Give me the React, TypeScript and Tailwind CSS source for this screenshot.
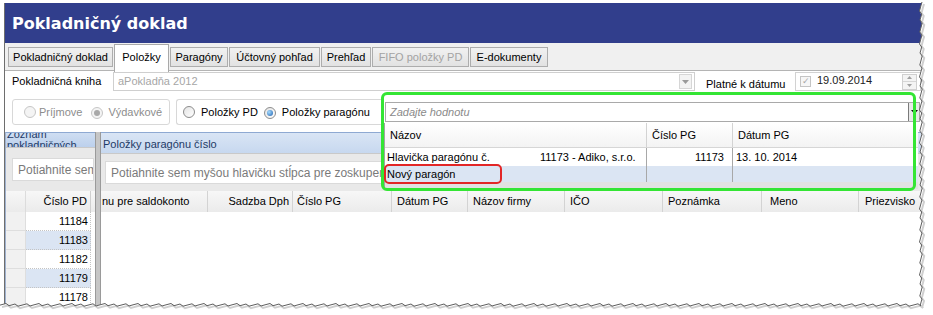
import React from 'react';

const tabs = [
  { label: 'Pokladničný doklad', w: 'w-[105px]' },
  { label: 'Položky', w: 'w-[55px]', active: true },
  { label: 'Paragóny', w: 'w-[58px]' },
  { label: 'Účtovný pohľad', w: 'w-[91px]' },
  { label: 'Prehľad', w: 'w-[50px]' },
  { label: 'FIFO položky PD', w: 'w-[97px]', disabled: true },
  { label: 'E-dokumenty', w: 'w-[78px]' },
];

const gridCols = [
  { label: 'nu pre saldokonto', w: 'w-[107px]', align: 'justify-start pl-[1px]' },
  { label: 'Sadzba Dph', w: 'w-[85px]', align: 'justify-end pr-[3px]' },
  { label: 'Číslo PG', w: 'w-[99px]', align: 'justify-start pl-[4px]' },
  { label: 'Dátum PG', w: 'w-[76px]', align: 'justify-start pl-[5px]' },
  { label: 'Názov firmy', w: 'w-[97px]', align: 'justify-start pl-[5px]' },
  { label: 'IČO', w: 'w-[98px]', align: 'justify-start pl-[5px]' },
  { label: 'Poznámka', w: 'w-[99px]', align: 'justify-start pl-[5px]' },
  { label: 'Meno', w: 'w-[97px]', align: 'justify-start pl-[8px]' },
  { label: 'Priezvisko', w: 'w-[70px]', align: 'justify-start pl-[6px]' },
];

const leftRows = [
  { v: '11184', sel: false },
  { v: '11183', sel: true },
  { v: '11182', sel: false },
  { v: '11179', sel: true },
  { v: '11178', sel: false },
];

const Radio = ({ checked, disabled }: { checked?: boolean; disabled?: boolean }) => (
  <span
    className={`inline-flex h-[12px] w-[12px] shrink-0 items-center justify-center rounded-full border ${
      disabled ? 'border-[#c6c6c6] bg-[#f4f4f4]' : 'border-[#8c8c8c] bg-gradient-to-br from-[#e4e4e4] to-white'
    }`}
  >
    {checked && (
      <span
        className={`h-[6px] w-[6px] rounded-full ${
          disabled ? 'bg-[#a9a9a9]' : 'bg-[radial-gradient(circle_at_35%_35%,#a6dcff,#1d5fae)]'
        }`}
      />
    )}
  </span>
);

// torn paper edge along the right and bottom side
const jag = (i: number) => ((i * 7919) % 11) / 11 * 3 - 1.5;
const buildEdge = () => {
  const pts: string[] = [];
  for (let y = 2; y <= 305; y += 3) pts.push(`${(921 + jag(y)).toFixed(1)},${y}`);
  for (let x = 921; x >= 0; x -= 3) pts.push(`${x},${(305 + jag(x + 5)).toFixed(1)}`);
  return pts;
};

const App: React.FC = () => {
  const edge = buildEdge();

  return (
    <div className="relative h-[315px] w-[933px] overflow-hidden bg-white font-['Liberation_Sans',Arial,sans-serif] text-[11px] text-black">
      <div className="ml-[4px] mt-[3px] flex h-[305px] w-[920px] flex-col overflow-hidden border-l border-[#6e6e6e] bg-white">
        {/* Title */}
        <div className="flex h-[40px] shrink-0 items-center bg-[#313e8c] pl-[7px] pt-[1px] font-['DejaVu_Sans',Verdana,sans-serif] text-[16px] font-bold text-white">
          Pokladničný doklad
        </div>

        {/* Tabs */}
        <div className="flex h-[28px] shrink-0 items-start gap-[1px] border-b border-[#b4b4b4] bg-[#f0f0f0] pl-[3px]">
          {tabs.map((t) =>
            t.active ? (
              <div
                key={t.label}
                className={`${t.w} z-10 mt-[1px] flex h-[28px] items-start justify-center border border-b-0 border-[#a9a9a9] bg-white pt-[4px]`}
              >
                {t.label}
              </div>
            ) : (
              <div
                key={t.label}
                className={`${t.w} mt-[4px] flex h-[20px] items-center justify-center border border-[#adadad] bg-gradient-to-b from-[#f1f1f1] to-[#e2e2e2] ${
                  t.disabled ? 'text-[#a3a3a3]' : ''
                }`}
              >
                {t.label}
              </div>
            )
          )}
        </div>

        {/* Content */}
        <div className="flex min-h-0 flex-1 flex-col bg-white">
          {/* Row 1 */}
          <div className="flex h-[21px] shrink-0 items-start pl-[7px] pt-[1px]">
            <div className="flex h-[19px] w-[101px] items-center">Pokladničná kniha</div>
            <div className="flex h-[19px] w-[582px] items-center justify-between border border-[#cfcfcf] pl-[4px] pr-[2px] text-[#a6a6a6]">
              <span>aPokladňa 2012</span>
              <span className="flex h-[15px] w-[13px] items-center justify-center border border-[#d6d6d6] bg-[#f3f3f3]">
                <svg width="7" height="4" viewBox="0 0 7 4">
                  <path d="M0 0 L7 0 L3.5 4 Z" fill="#9a9a9a" />
                </svg>
              </span>
            </div>
            <div className="flex h-[19px] w-[100px] items-end pl-[11px] leading-[13px]">Platné k dátumu</div>
            <div className="flex h-[19px] w-[126px] items-center border border-[#d2d2d2] pl-[4px] pr-[3px]">
              <span className="flex h-[11px] w-[11px] items-center justify-center border border-[#c4c4c4] bg-[#f6f6f6] text-[9px] leading-none text-[#a8a8a8]">
                ✓
              </span>
              <span className="ml-[6px] mt-[-3px] text-[#222]">19.09.2014</span>
              <span className="ml-auto flex h-[16px] w-[15px] flex-col border border-[#d0d0d0]">
                <span className="flex flex-1 items-center justify-center border-b border-[#d6d6d6] bg-[#f4f4f4]">
                  <svg width="5" height="3" viewBox="0 0 5 3">
                    <path d="M0 3 L5 3 L2.5 0 Z" fill="#a0a0a0" />
                  </svg>
                </span>
                <span className="flex flex-1 items-center justify-center bg-[#f4f4f4]">
                  <svg width="5" height="3" viewBox="0 0 5 3">
                    <path d="M0 0 L5 0 L2.5 3 Z" fill="#a0a0a0" />
                  </svg>
                </span>
              </span>
            </div>
          </div>

          {/* Row 2 */}
          <div className="mt-[7px] flex h-[26px] shrink-0 items-start pl-[7px]">
            <div className="flex h-[26px] w-[158px] items-center rounded-[3px] border border-[#d8d8d8] pl-[11px] text-[#8d8d8d]">
              <Radio disabled />
              <span className="ml-[3px]">Príjmove</span>
              <span className="ml-[9px]">
                <Radio checked disabled />
              </span>
              <span className="ml-[5px]">Výdavkové</span>
            </div>
            <div className="ml-[6px] flex h-[26px] w-[206px] items-center rounded-l-[3px] border border-r-0 border-[#d8d8d8] pl-[6px]">
              <Radio />
              <span className="ml-[6px]">Položky PD</span>
              <span className="ml-[6px]">
                <Radio checked />
              </span>
              <span className="ml-[6px]">Položky paragónu</span>
            </div>
            <div className="ml-[3px] mt-[3px] flex h-[20px] w-[535px] items-center justify-between border border-[#a9a9a9] bg-white pl-[4px]">
              <span className="italic text-[#8a8a8a]">Zadajte hodnotu</span>
              <span className="flex h-[18px] w-[11px] items-center justify-center border-l border-[#7a7a7a] bg-[#e9e9e9]">
                <svg width="7" height="4" viewBox="0 0 7 4">
                  <path d="M0 0 L7 0 L3.5 4 Z" fill="#111" />
                </svg>
              </span>
            </div>
          </div>

          {/* Panels */}
          <div className="mt-[7px] flex min-h-0 flex-1">
            {/* Left panel */}
            <div className="flex w-[90px] shrink-0 flex-col border-l border-[#9fb2cf]">
              <div className="h-[15px] shrink-0 overflow-hidden border-t border-[#8ea9d2] bg-gradient-to-b from-[#cfdef2] to-[#bcd0ec] pl-[1px] text-[#1e3a66]">
                <div className="mt-[-4px] leading-[11px]">
                  Zoznam
                  <br />
                  pokladničných
                </div>
              </div>
              <div className="flex h-[44px] shrink-0 items-center border-t border-[#c9c9c9] bg-[#e9e9e9] pl-[6px]">
                <div className="flex h-[23px] w-[82px] items-center overflow-hidden whitespace-nowrap border border-[#dadada] bg-white pl-[5px] text-[12px] text-[#7a7a7a]">
                  Potiahnite sem myšou
                </div>
              </div>
              <div className="flex h-[21px] shrink-0 bg-gradient-to-b from-[#f7f7f7] to-[#ebebeb]">
                <div className="w-[20px] border-r border-[#dcdcdc]" />
                <div className="flex w-[65px] items-center justify-end border-r border-[#cfcfcf] pr-[3px]">Číslo PD</div>
              </div>
              {leftRows.map((r) => (
                <div key={r.v} className="flex h-[19px] shrink-0">
                  <div className="w-[20px] border-b border-r border-[#dedede] bg-[#f1f1f1]" />
                  <div
                    className={`flex w-[65px] items-center justify-end border-b border-r border-dotted border-[#c4c4c4] pr-[2px] ${
                      r.sel ? 'bg-[#dbe5f3]' : 'bg-white'
                    }`}
                  >
                    {r.v}
                  </div>
                </div>
              ))}
            </div>

            {/* Splitter */}
            <div className="w-[6px] shrink-0 border-x border-[#9a9a9a] bg-[#c6c6c6]" />

            {/* Right panel */}
            <div className="flex min-w-0 flex-1 flex-col">
              <div className="flex h-[21px] shrink-0 items-center border-t border-[#8ea9d2] bg-gradient-to-b from-[#d9e5f5] to-[#c7d8ef] pl-[2px] pt-[2px] text-[#1e3a66]">
                Položky paragónu číslo
              </div>
              <div className="flex h-[38px] shrink-0 items-center border-t border-[#c9c9c9] bg-[#e9e9e9] pl-[4px]">
                <div className="flex h-[23px] w-[300px] items-center whitespace-nowrap border border-[#dadada] bg-white pl-[5px] text-[12px] text-[#7a7a7a]">
                  Potiahnite sem myšou hlavičku stĺpca pre zoskupenie
                </div>
              </div>
              <div className="flex h-[21px] shrink-0 bg-gradient-to-b from-[#f7f7f7] to-[#ebebeb]">
                {gridCols.map((c) => (
                  <div
                    key={c.label}
                    className={`${c.w} flex shrink-0 items-center whitespace-nowrap border-r border-[#d3d3d3] ${c.align}`}
                  >
                    {c.label}
                  </div>
                ))}
              </div>
              <div className="flex-1 bg-white" />
            </div>
          </div>
        </div>
      </div>

      {/* Lookup popup */}
      <div className="absolute left-[384px] top-[123px] flex h-[66px] w-[534px] flex-col border-l border-[#a3a3a3] bg-white">
        <div className="flex h-[25px] shrink-0 border-b border-[#d6d6d6] bg-gradient-to-b from-white to-[#f3f3f3]">
          <div className="flex w-[262px] items-center border-r border-[#d3d3d3] pl-[5px]">Názov</div>
          <div className="flex w-[86px] items-center border-r border-[#d3d3d3] pl-[5px]">Číslo PG</div>
          <div className="flex flex-1 items-center pl-[5px]">Dátum PG</div>
        </div>
        <div className="flex h-[18px] shrink-0 bg-white">
          <div className="flex w-[262px] items-center border-r border-[#a8a8a8] pl-[2px]">
            <span className="w-[153px]">Hlavička paragónu č.</span>
            <span>11173 - Adiko, s.r.o.</span>
          </div>
          <div className="flex w-[86px] items-center justify-end border-r border-[#a8a8a8] pr-[8px]">11173</div>
          <div className="flex flex-1 items-center pl-[3px]">13. 10. 2014</div>
        </div>
        <div className="flex h-[16px] shrink-0 bg-[#dbe5f3]">
          <div className="flex w-[262px] items-center border-r border-[#a8a8a8] pl-[2px]">Nový paragón</div>
          <div className="w-[86px] border-r border-[#a8a8a8]" />
          <div className="flex-1" />
        </div>
        <div className="flex-1 bg-[#e2e2e2]" />
      </div>

      {/* Annotation frames */}
      <div className="pointer-events-none absolute left-[381px] top-[92px] h-[99px] w-[535px] rounded-[6px] border-[3px] border-[#34e534]" />
      <div className="pointer-events-none absolute left-[384px] top-[164px] h-[20px] w-[118px] rounded-[5px] border-2 border-[#e22626]" />

      {/* Torn edge */}
      <svg className="pointer-events-none absolute left-0 top-0" width="933" height="315" viewBox="0 0 933 315">
        <polygon points={`921,0 933,0 933,315 0,315 ${[...edge].reverse().join(' ')}`} fill="white" />
        <polyline points={edge.join(' ')} fill="none" stroke="#cfcfcf" strokeWidth="2" transform="translate(2,2)" />
        <polyline points={edge.join(' ')} fill="none" stroke="#5e5e5e" strokeWidth="1" />
      </svg>
    </div>
  );
};

export default App;
